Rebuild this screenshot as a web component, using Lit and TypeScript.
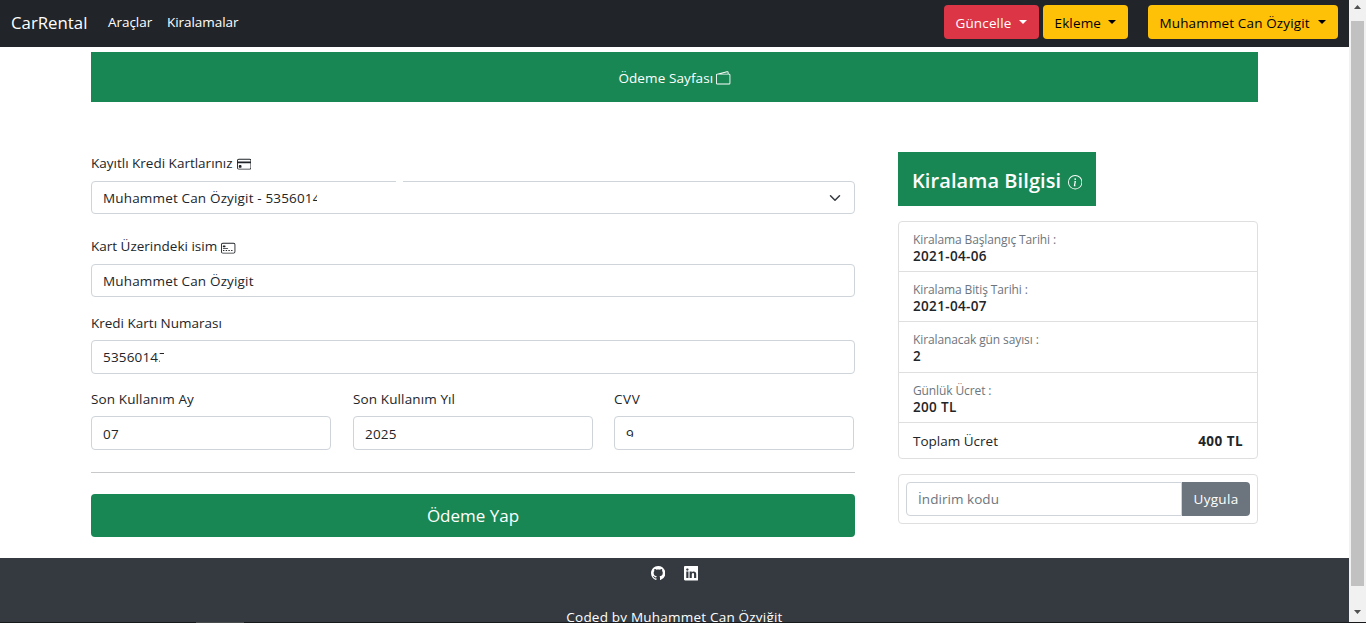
import { LitElement, html, css } from "lit";
import { customElement } from "lit/decorators.js";

const icons = {
  wallet: html`<svg class="icon" viewBox="0 0 16 16"><path d="M12.136.326A1.5 1.5 0 0 1 14 1.78V3h.5A1.5 1.5 0 0 1 16 4.5v9a1.5 1.5 0 0 1-1.5 1.5h-13A1.5 1.5 0 0 1 0 13.5v-9a1.5 1.5 0 0 1 1.432-1.499L12.136.326zM5.562 3H13V1.78a.5.5 0 0 0-.621-.484L5.562 3zM1.5 4a.5.5 0 0 0-.5.5v9a.5.5 0 0 0 .5.5h13a.5.5 0 0 0 .5-.5v-9a.5.5 0 0 0-.5-.5h-13z"/></svg>`,
  card: html`<svg class="icon" viewBox="0 0 16 16"><path d="M0 4a2 2 0 0 1 2-2h12a2 2 0 0 1 2 2v8a2 2 0 0 1-2 2H2a2 2 0 0 1-2-2V4zm2-1a1 1 0 0 0-1 1v1h14V4a1 1 0 0 0-1-1H2zm13 4H1v5a1 1 0 0 0 1 1h12a1 1 0 0 0 1-1V7z"/><path d="M2 10a1 1 0 0 1 1-1h1a1 1 0 0 1 1 1v1a1 1 0 0 1-1 1H3a1 1 0 0 1-1-1v-1z"/></svg>`,
  cardFront: html`<svg class="icon" viewBox="0 0 16 16"><path d="M14 3a1 1 0 0 1 1 1v8a1 1 0 0 1-1 1H2a1 1 0 0 1-1-1V4a1 1 0 0 1 1-1h12zM2 2a2 2 0 0 0-2 2v8a2 2 0 0 0 2 2h12a2 2 0 0 0 2-2V4a2 2 0 0 0-2-2H2z"/><path d="M2 5.5a.5.5 0 0 1 .5-.5h2a.5.5 0 0 1 .5.5v1a.5.5 0 0 1-.5.5h-2a.5.5 0 0 1-.5-.5v-1zm0 3a.5.5 0 0 1 .5-.5h5a.5.5 0 0 1 0 1h-5a.5.5 0 0 1-.5-.5zm0 2a.5.5 0 0 1 .5-.5h1a.5.5 0 0 1 0 1h-1a.5.5 0 0 1-.5-.5zm3 0a.5.5 0 0 1 .5-.5h1a.5.5 0 0 1 0 1h-1a.5.5 0 0 1-.5-.5zm3 0a.5.5 0 0 1 .5-.5h1a.5.5 0 0 1 0 1h-1a.5.5 0 0 1-.5-.5zm3 0a.5.5 0 0 1 .5-.5h1a.5.5 0 0 1 0 1h-1a.5.5 0 0 1-.5-.5z"/></svg>`,
  info: html`<svg class="icon" viewBox="0 0 16 16"><path d="M8 15A7 7 0 1 1 8 1a7 7 0 0 1 0 14zm0 1A8 8 0 1 0 8 0a8 8 0 0 0 0 16z"/><path d="m8.93 6.588-2.29.287-.082.38.45.083c.294.07.352.176.288.469l-.738 3.468c-.194.897.105 1.319.808 1.319.545 0 1.178-.252 1.465-.598l.088-.416c-.2.176-.492.246-.686.246-.275 0-.375-.193-.304-.533L8.93 6.588zM9 4.5a1 1 0 1 1-2 0 1 1 0 0 1 2 0z"/></svg>`,
  github: html`<svg class="icon" viewBox="0 0 16 16"><path d="M8 0C3.58 0 0 3.58 0 8c0 3.54 2.29 6.53 5.47 7.59.4.07.55-.17.55-.38 0-.19-.01-.82-.01-1.49-2.01.37-2.53-.49-2.69-.94-.09-.23-.48-.94-.82-1.13-.28-.15-.68-.52-.01-.53.63-.01 1.08.58 1.23.82.72 1.21 1.87.87 2.33.66.07-.52.28-.87.51-1.07-1.78-.2-3.64-.89-3.64-3.95 0-.87.31-1.59.82-2.15-.08-.2-.36-1.02.08-2.12 0 0 .67-.21 2.2.82.64-.18 1.32-.27 2-.27.68 0 1.36.09 2 .27 1.53-1.04 2.2-.82 2.2-.82.44 1.1.16 1.92.08 2.12.51.56.82 1.27.82 2.15 0 3.07-1.87 3.75-3.65 3.95.29.25.54.73.54 1.48 0 1.07-.01 1.93-.01 2.2 0 .21.15.46.55.38A8.012 8.012 0 0 0 16 8c0-4.42-3.58-8-8-8z"/></svg>`,
  linkedin: html`<svg class="icon" viewBox="0 0 16 16"><path d="M0 1.146C0 .513.526 0 1.175 0h13.65C15.474 0 16 .513 16 1.146v13.708c0 .633-.526 1.146-1.175 1.146H1.175C.526 16 0 15.487 0 14.854V1.146zm4.943 12.248V6.169H2.542v7.225h2.401zm-1.2-8.212c.837 0 1.358-.554 1.358-1.248-.015-.709-.52-1.248-1.342-1.248-.822 0-1.359.54-1.359 1.248 0 .694.521 1.248 1.327 1.248h.016zm4.908 8.212V9.359c0-.216.016-.432.08-.586.173-.431.568-.878 1.232-.878.869 0 1.216.662 1.216 1.634v3.865h2.401V9.25c0-2.22-1.184-3.252-2.764-3.252-1.274 0-1.845.7-2.165 1.193v.025h-.016a5.54 5.54 0 0 1 .016-.025V6.169h-2.4c.03.678 0 7.225 0 7.225h2.4z"/></svg>`,
};

const rentalRows = [
  ["Kiralama Başlangıç Tarihi :", "2021-04-06"],
  ["Kiralama Bitiş Tarihi :", "2021-04-07"],
  ["Kiralanacak gün sayısı :", "2"],
  ["Günlük Ücret :", "200 TL"],
];

@customElement("app-root")
export class AppRoot extends LitElement {
  static styles = css`
    :host {
      display: grid;
      grid-template-columns: 1349px 17px;
      grid-template-rows: 622px 1px;
      width: 1366px;
      height: 623px;
      overflow: hidden;
      background: #fff;
      color: #212529;
      font: 13.5px/21px "Open Sans", "Noto Sans", sans-serif;
    }
    * { box-sizing: border-box; }
    .t { white-space: nowrap; display: inline-block; }
    .icon { width: 14.4px; height: 14.4px; fill: currentColor; display: block; flex: none; }
    .page { display: flex; flex-direction: column; overflow: hidden; }
    .nav { height: 47px; flex: none; background: #212529; color: #fff; display: flex; align-items: center; padding: 0 11px 3px; }
    .brand { font-size: 16.8px; width: 97px; }
    .link { width: 59px; padding-top: 1px; letter-spacing: -0.05px; }
    .spacer { flex: 1; }
    .btn { height: 34px; border-radius: 4px; display: flex; align-items: center; justify-content: space-between; padding: 2px 12px 0 11.5px; letter-spacing: 0.14px; }
    .btn::after { content: ""; border: 4.3px solid transparent; border-top-color: currentColor; border-bottom: 0; margin-top: -2px; }
    .danger { background: #dc3545; width: 95px; margin-right: 4px; }
    .warn { background: #ffc107; color: #000; width: 85px; margin-right: 20px; }
    .user { width: 190px; margin-right: 0; }
    .container { width: 1167px; margin: 5px 0 0 91px; height: 506px; flex: none; }
    .banner { height: 50px; background: #198754; color: #fff; display: flex; align-items: center; justify-content: center; gap: 3px; padding-top: 3px; letter-spacing: 0.1px; }
    .columns { display: flex; justify-content: space-between; margin-top: 50px; }
    .form { width: 764px; display: flex; flex-direction: column; }
    .label { display: flex; align-items: center; gap: 4px; height: 21px; margin-bottom: 7px; }
    .label .icon { margin-top: 3px; }
    .first { padding-top: 2px; }
    .first .icon { margin-top: 2px; }
    .tight { margin-bottom: 6px; }
    .spaced { letter-spacing: 0.12px; }
    .wide { letter-spacing: 0.6px; }
    .input { height: 34px; border: 1px solid #ced4da; border-radius: 4px; padding: 0 11px; display: flex; align-items: center; position: relative; letter-spacing: 0.16px; }
    .short { height: 33px; padding-top: 1px; }
    .low { padding-top: 2px; }
    .select { justify-content: space-between; padding-right: 13px; }
    .chevron { width: 12px; height: 12px; fill: none; stroke: #343a40; stroke-width: 2; stroke-linecap: round; stroke-linejoin: round; }
    .line-gap { position: absolute; left: 304px; top: -1px; width: 7px; height: 1px; background: #fff; }
    .f1 { margin-top: 1px; margin-bottom: 22px; }
    .f2 { margin-bottom: 16px; }
    .f3 { margin-bottom: 15px; }
    .triple { display: flex; gap: 22px; }
    .triple > div { width: 240px; }
    .triple > div:last-child { margin-left: -1px; }
    .rule { height: 1px; background: #c8c9ca; margin: 22px 0 21px; }
    .pay { height: 43px; border-radius: 4px; background: #198754; color: #fff; font-size: 17px; display: flex; align-items: center; justify-content: center; }
    .clip { overflow: hidden; }
    .c-select { width: 214px; }
    .c-number { width: 61px; }
    .mask { position: absolute; background: #fff; }
    .m-number { left: 66px; top: 13px; width: 8px; height: 5px; }
    .m-number-end { left: 68px; top: 13px; width: 6px; height: 12px; }
    .m-cvv { left: 11px; top: 20px; width: 9px; height: 2px; }
    .m-cvv-end { left: 14px; top: 20px; width: 7px; height: 8px; }
    .side { width: 360px; }
    .title { width: 198px; height: 54px; background: #198754; color: #fff; font-size: 20px; font-weight: 600; letter-spacing: 0.08px; display: flex; align-items: center; justify-content: space-between; padding: 3px 14px 0 14px; }
    .title .icon { margin-top: 4px; }
    .list { margin-top: 15px; height: 238px; border: 1px solid #dfdfdf; border-radius: 4px; }
    .row { height: 50px; border-bottom: 1px solid #dfdfdf; padding: 9px 14px 0; line-height: 17px; }
    .row:nth-child(3) { height: 51px; }
    .key { color: #6c757d; font-size: 12px; letter-spacing: -0.11px; }
    .val { font-weight: 600; letter-spacing: 0.34px; }
    .total { display: flex; justify-content: space-between; align-items: center; height: 36px; padding: 0 14px; }
    .total .sum { font-weight: 700; letter-spacing: 0.45px; }
    .promo { margin-top: 15px; height: 50px; border: 1px solid #dfdfdf; border-radius: 4px; padding: 7px; display: flex; }
    .promo .input { width: 276px; border-radius: 4px 0 0 4px; color: #6c757d; letter-spacing: 0.05px; }
    .apply { width: 68px; height: 34px; background: #6c757d; color: #fff; border-radius: 0 4px 4px 0; display: flex; align-items: center; justify-content: center; letter-spacing: 0.3px; }
    .footer { flex: none; height: 64px; background: #343a40; color: #fff; display: flex; flex-direction: column; align-items: center; overflow: hidden; letter-spacing: 0.21px; }
    .social { display: flex; gap: 18.6px; margin-top: 8.4px; height: 41px; flex: none; }
    .scroll { background: #f1f1f1; display: flex; flex-direction: column; align-items: center; }
    .arrow { width: 7px; height: 4px; fill: #505050; margin-top: 5px; }
    .thumb { width: 13px; height: 565px; background: #c1c1c1; margin: 12px 0 20px; }
    .down { margin-top: 4px; }
    .taskbar { grid-column: 1 / 3; background: #17191b; padding-left: 196px; }
    .task { width: 48px; height: 1px; background: #4a4b4c; }
  `;

  render() {
    return html`
      <div class="page">
        <div class="nav">
          <div class="brand"><span class="t">CarRental</span></div>
          <div class="link"><span class="t">Araçlar</span></div>
          <div class="link"><span class="t">Kiralamalar</span></div>
          <div class="spacer"></div>
          <div class="btn danger"><span class="t">Güncelle</span></div>
          <div class="btn warn"><span class="t">Ekleme</span></div>
          <div class="btn warn user"><span class="t">Muhammet Can Özyigit</span></div>
        </div>
        <div class="container">
          <div class="banner"><span class="t">Ödeme Sayfası</span>${icons.wallet}</div>
          <div class="columns">
            <div class="form">
              <div class="label first"><span class="t">Kayıtlı Kredi Kartlarınız</span>${icons.card}</div>
              <div class="input short select f1">
                <div class="clip c-select"><span class="t">Muhammet Can Özyigit - 5356014</span></div>
                <svg class="chevron" viewBox="0 0 16 16"><path d="M2 5l6 6 6-6"/></svg>
                <div class="line-gap"></div>
              </div>
              <div class="label"><span class="t">Kart Üzerindeki isim</span>${icons.cardFront}</div>
              <div class="input short f2"><span class="t">Muhammet Can Özyigit</span></div>
              <div class="label tight"><span class="t">Kredi Kartı Numarası</span></div>
              <div class="input f3">
                <div class="clip c-number"><span class="t">53560145</span></div>
                <div class="mask m-number"></div>
                <div class="mask m-number-end"></div>
              </div>
              <div class="triple">
                <div><div class="label tight spaced"><span class="t">Son Kullanım Ay</span></div><div class="input low"><span class="t">07</span></div></div>
                <div><div class="label tight spaced"><span class="t">Son Kullanım Yıl</span></div><div class="input low"><span class="t">2025</span></div></div>
                <div>
                  <div class="label tight wide"><span class="t">CVV</span></div>
                  <div class="input low"><span class="t">9</span><div class="mask m-cvv"></div><div class="mask m-cvv-end"></div></div>
                </div>
              </div>
              <div class="rule"></div>
              <div class="pay"><span class="t">Ödeme Yap</span></div>
            </div>
            <div class="side">
              <div class="title"><span class="t">Kiralama Bilgisi</span>${icons.info}</div>
              <div class="list">
                ${rentalRows.map(([k, v]) => html`<div class="row"><div class="key"><span class="t">${k}</span></div><div class="val"><span class="t">${v}</span></div></div>`)}
                <div class="total"><span class="t">Toplam Ücret</span><span class="t sum">400 TL</span></div>
              </div>
              <div class="promo"><div class="input"><span class="t">İndirim kodu</span></div><div class="apply"><span class="t">Uygula</span></div></div>
            </div>
          </div>
        </div>
        <div class="footer">
          <div class="social">${icons.github}${icons.linkedin}</div>
          <span class="t">Coded by Muhammet Can Özyiğit</span>
        </div>
      </div>
      <div class="scroll">
        <svg class="arrow" viewBox="0 0 7 4"><path d="M0 4L3.5 0 7 4z"/></svg>
        <div class="thumb"></div>
        <svg class="arrow down" viewBox="0 0 7 4"><path d="M0 0L3.5 4 7 0z"/></svg>
      </div>
      <div class="taskbar"><div class="task"></div></div>
    `;
  }
}
